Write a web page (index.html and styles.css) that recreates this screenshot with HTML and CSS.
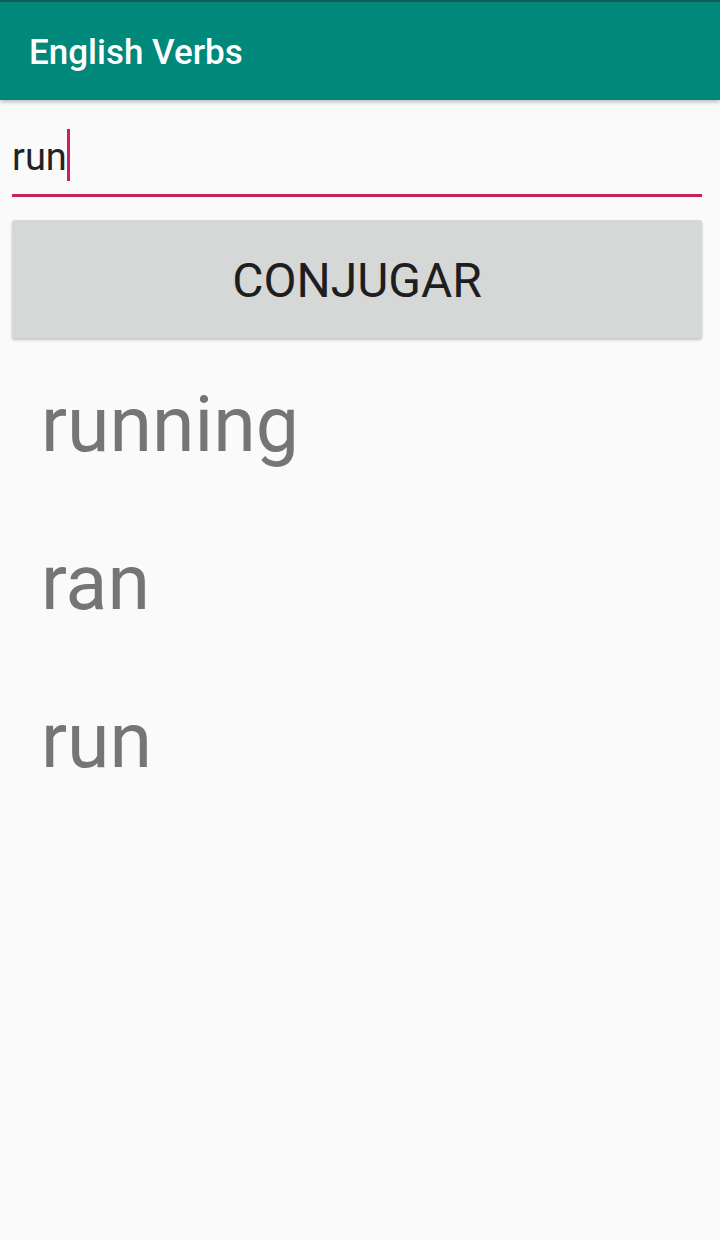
FILE: index.html
```html
<!DOCTYPE html>
<html lang="en">
<head>
<meta charset="utf-8">
<title>English Verbs</title>
<link rel="stylesheet" href="styles.css">
</head>
<body>
<header class="appbar">
  <h1 class="appbar-title">English Verbs</h1>
</header>
<main class="content">
  <div class="field">
    <span class="field-text">run</span><span class="cursor"></span>
  </div>
  <button class="btn" type="button">CONJUGAR</button>
  <ul class="forms">
    <li class="form">running</li>
    <li class="form">ran</li>
    <li class="form">run</li>
  </ul>
</main>
</body>
</html>
```

FILE: styles.css
```css
* { box-sizing: border-box; }
html, body {
  margin: 0;
  padding: 0;
  background: #fafafa;
  font-family: Roboto, "Noto Sans", "Liberation Sans", sans-serif;
}
body { height: 1240px; overflow: hidden; }

.appbar {
  height: 100px;
  background: #00887a;
  border-top: 2px solid #0e5f55;
  box-shadow: 0 2px 4px rgba(0,0,0,0.25);
  position: relative;
  z-index: 1;
}
.appbar-title {
  margin: 0;
  padding: 3px 0 0 29px;
  font-size: 35px;
  font-weight: 500;
  line-height: 95px;
  color: #ffffff;
}

.content {
  padding: 27px 18px 0 12px;
}

.field {
  height: 70px;
  line-height: 60px;
  border-bottom: 3px solid #c8215e;
  white-space: nowrap;
}
.field-text {
  font-size: 38px;
  color: #222222;
}
.cursor {
  display: inline-block;
  width: 3px;
  height: 52px;
  margin-left: 0;
  background: #d01d62;
  vertical-align: -11px;
}

.btn {
  display: block;
  width: 100%;
  height: 118px;
  margin-top: 23px;
  padding: 4px 0 0;
  border: none;
  border-radius: 2px;
  background: #d6d7d7;
  box-shadow: 0 2px 3px rgba(0,0,0,0.22);
  font-family: inherit;
  font-size: 48px;
  font-weight: 400;
  color: #1e1e1e;
  text-align: center;
  line-height: 110px;
}

.forms {
  list-style: none;
  margin: 8px 0 0;
  padding: 0 0 0 29px;
}
.form {
  font-size: 77px;
  line-height: 158px;
  color: #757575;
}
```
